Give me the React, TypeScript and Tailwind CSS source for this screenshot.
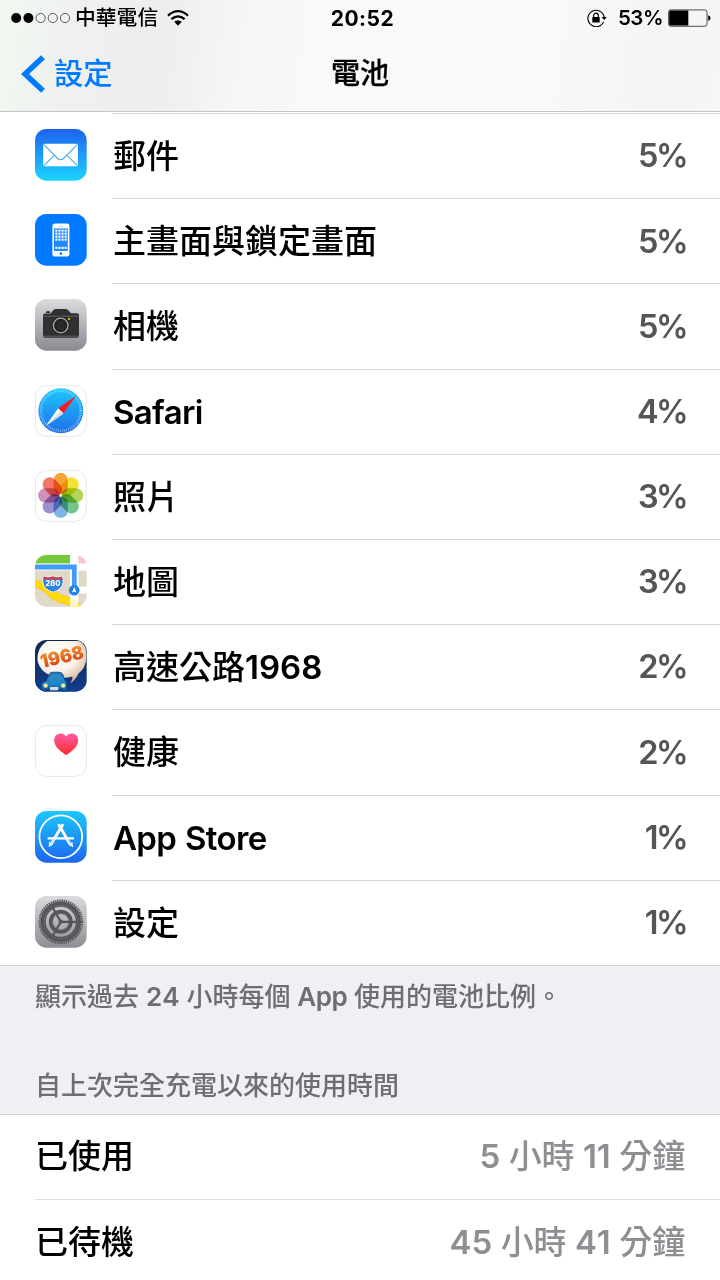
import { Fragment, type ReactNode } from 'react';
import { clsx } from 'clsx';

interface AppUsage {
  name: string;
  percent: number;
  icon: ReactNode;
}

interface IconTileProps {
  id: string;
  from: string;
  to: string;
  outlined?: boolean;
  children: ReactNode;
}

// Latin and digits need a heavier weight to sit evenly next to the CJK glyphs
function MixedText({ children }: { children: string }) {
  return (
    <>
      {children.split(/([A-Za-z]+|\d+)/).map((part, i) => {
        if (/^[A-Za-z]+$/.test(part)) {
          return <span key={i} className="font-semibold tracking-[-0.02em]">{part}</span>;
        }
        if (/^\d+$/.test(part)) {
          return <span key={i} className="font-semibold [font-kerning:none]">{part}</span>;
        }
        return <Fragment key={i}>{part}</Fragment>;
      })}
    </>
  );
}

// Rounded 52px tile shared by all the app icons
function IconTile({ id, from, to, outlined = false, children }: IconTileProps) {
  return (
    <svg viewBox="0 0 52 52" className="size-[52px] shrink-0">
      <defs>
        <linearGradient id={`${id}-bg`} x1="0" y1="0" x2="0" y2="1">
          <stop offset="0" stopColor={from} />
          <stop offset="1" stopColor={to} />
        </linearGradient>
        <clipPath id={`${id}-clip`}>
          <rect x="0" y="0" width="51.7" height="51.7" rx="11.5" />
        </clipPath>
      </defs>
      <g clipPath={`url(#${id}-clip)`}>
        <rect width="52" height="52" fill={`url(#${id}-bg)`} />
        {children}
      </g>
      {outlined && (
        <rect x="0.4" y="0.4" width="51" height="51" rx="11.5" fill="none" stroke="#e8e8e8" />
      )}
    </svg>
  );
}

function MailIcon() {
  return (
    <IconTile id="mail" from="#1f62ef" to="#1bd4fd">
      <rect x="8.2" y="14.8" width="34.8" height="22.4" rx="1.5" fill="#fff" />
      <path
        d="M8.7 15.3 L22.2 29 Q25.6 32.4 29 29 L42.5 15.3 M8.7 36.7 L19.5 26.4 M42.5 36.7 L31.8 26.4"
        fill="none"
        stroke="#48aaf6"
        strokeWidth="1.1"
      />
    </IconTile>
  );
}

function HomeLockIcon() {
  return (
    <IconTile id="home" from="#017aff" to="#017aff">
      <rect x="17.4" y="9.6" width="17" height="33" rx="2.8" fill="#fff" />
      <rect x="19" y="14.4" width="13.8" height="22.6" fill="#2389fb" />
      {[15.6, 18.6, 21.6, 24.6, 32.8].map((y) =>
        [20.3, 23.4, 26.5, 29.6].map((x) => (
          <rect key={`${x}-${y}`} x={x} y={y} width="2.1" height="2.1" fill="#fff" />
        ))
      )}
      <rect x="23.8" y="11.8" width="4.2" height="0.7" fill="#8ac0fb" />
      <circle cx="25.9" cy="39.6" r="1.3" fill="#017aff" />
    </IconTile>
  );
}

function CameraIcon() {
  return (
    <IconTile id="camera" from="#dcdddf" to="#898a90">
      <path
        d="M8 16.5 Q8 14.7 9.8 14.5 H15.5 L18.5 11 Q19.4 10 21 10 H30.6 Q32 10 33 11 L36 14.3 H42 Q44 14.3 44 16.3 V36.8 Q44 38.8 42 38.8 H10 Q8 38.8 8 36.8 Z"
        fill="#303032"
      />
      <path d="M11 14 V12.6 Q13 11.5 15 12.6 V14 Z" fill="#303032" />
      <path d="M8 17.2 H44 M8 37.2 H44" stroke="#77787a" strokeWidth="0.7" />
      <circle cx="25.7" cy="26.5" r="9.2" fill="#28282a" />
      <circle cx="25.7" cy="26.5" r="7.3" fill="#202123" stroke="#aaabad" strokeWidth="1.3" />
      <circle cx="25.7" cy="26.5" r="4.8" fill="#28292b" />
      <circle cx="34.1" cy="19.9" r="1.2" fill="#e5a81c" />
    </IconTile>
  );
}

function SafariIcon() {
  return (
    <IconTile id="safari" from="#fff" to="#fff" outlined>
      <defs>
        <linearGradient id="safari-dial" x1="0" y1="0" x2="0" y2="1">
          <stop offset="0" stopColor="#1cc7fb" />
          <stop offset="1" stopColor="#1e6fea" />
        </linearGradient>
      </defs>
      <circle cx="25.8" cy="25.8" r="22.5" fill="url(#safari-dial)" />
      <circle
        cx="25.8"
        cy="25.8"
        r="20"
        fill="none"
        stroke="#d4efff"
        strokeWidth="2.6"
        strokeDasharray="0.6 1.5"
        opacity="0.85"
      />
      <path d="M41 10.7 L23.2 23.3 L28.4 28.4 Z" fill="#fb1c22" />
      <path d="M10.7 41 L23.2 23.3 L28.4 28.4 Z" fill="#fff" />
      <path d="M10.7 41 L28.4 28.4 L25.8 25.8 Z" fill="#d8dde2" />
    </IconTile>
  );
}

const PETAL_COLORS = [
  '#f7a436',
  '#f0e334',
  '#b3d558',
  '#74c58a',
  '#7fb5e3',
  '#9c8fcb',
  '#d090bc',
  '#f47767',
];

function PhotosIcon() {
  return (
    <IconTile id="photos" from="#fff" to="#fff" outlined>
      <g className="isolate">
        {PETAL_COLORS.map((color, i) => (
          <rect
            key={color}
            x="18.6"
            y="2.8"
            width="14.2"
            height="21.6"
            rx="7.1"
            fill={color}
            transform={`rotate(${i * 45} 25.7 25.4)`}
            className="mix-blend-multiply"
          />
        ))}
      </g>
      <circle cx="25.7" cy="25.4" r="1.1" fill="#fff" />
    </IconTile>
  );
}

function MapsIcon() {
  return (
    <IconTile id="maps" from="#fff" to="#fff">
      <rect width="35" height="8.4" fill="#74c83c" />
      <rect x="43.3" width="9" height="8.4" fill="#f7c6d1" />
      <rect y="15.4" width="35" height="37" fill="#e0d9c9" />
      <rect x="43.3" y="15.8" width="9" height="15.8" fill="#e0d9c9" />
      <rect x="43.3" y="38.6" width="9" height="14" fill="#e0d9c9" />
      <path d="M-2 29 Q7 29 14 36 T30 45 Q39 47.5 46 56" fill="none" stroke="#f2c52b" strokeWidth="8.4" />
      <path d="M-2 29 Q7 29 14 36 T30 45 Q39 47.5 46 56" fill="none" stroke="#ffd90c" strokeWidth="7.4" />
      <rect x="35" y="15.4" width="8.3" height="37" fill="#fff" opacity="0.75" />
      <path d="M0 12 H39.3 V35" fill="none" stroke="#429bf8" strokeWidth="4.8" />
      <path
        d="M8.6 21.3 Q13 23 18 21 Q23 23 27.2 21.3 Q28.4 24 28.2 27 Q27.4 34.5 18 37.2 Q8.6 34.5 7.7 27 Q7.5 24 8.6 21.3 Z"
        fill="#2d82e3"
        stroke="#fff"
        strokeWidth="0.8"
      />
      <path d="M8.8 21.6 Q13 23.2 18 21.4 Q23 23.2 27 21.6 L27.7 24.5 H8.2 Z" fill="#d73d43" />
      <text x="18" y="31.4" textAnchor="middle" fill="#fff" fontSize="7.6" fontWeight="800" fontFamily="Inter, sans-serif">
        280
      </text>
      <circle cx="39.2" cy="35.2" r="5.3" fill="#1880f2" />
      <path d="M39.2 31.8 L41.6 37.8 L39.2 36.4 L36.8 37.8 Z" fill="#fff" />
    </IconTile>
  );
}

function HighwayIcon() {
  return (
    <IconTile id="highway" from="#0c2750" to="#143d8d">
      <defs>
        <radialGradient id="highway-bubble" cx="0.4" cy="0.3" r="0.75">
          <stop offset="0" stopColor="#fff" />
          <stop offset="0.55" stopColor="#faf3ea" />
          <stop offset="1" stopColor="#ceae8f" />
        </radialGradient>
        <linearGradient id="highway-number" x1="0" y1="0" x2="0" y2="1">
          <stop offset="0.2" stopColor="#f08f28" />
          <stop offset="0.8" stopColor="#dd4a1e" />
        </linearGradient>
        <linearGradient id="highway-car" x1="0" y1="0" x2="0" y2="1">
          <stop offset="0" stopColor="#176bb4" />
          <stop offset="0.55" stopColor="#2189cc" />
          <stop offset="1" stopColor="#0b4f98" />
        </linearGradient>
      </defs>
      <path
        d="M12 1 H44 Q52 4 51.5 17 Q51 28 43.5 33.5 Q40.5 40 35 43.5 Q38 39.5 37.4 36.6 Q31 39 22 37.5 Q5 34 2.4 20 Q1.6 8 12 1 Z"
        fill="url(#highway-bubble)"
      />
      <text
        transform="rotate(-13 27 17)"
        x="27"
        y="23.2"
        textAnchor="middle"
        fill="url(#highway-number)"
        fontSize="18.5"
        fontWeight="900"
        fontFamily="Inter, sans-serif"
        textLength="44"
        lengthAdjust="spacingAndGlyphs"
      >
        1968
      </text>
      <path
        d="M11 41 L14.3 34 Q15.2 32.2 18 32.2 H24 Q26.6 32.2 27.6 34 L30.5 41 Q32 42 32 45 V50 Q31.8 51.7 30 51.7 H27.5 V49.5 H11 V51.7 H8.4 Q6.5 51.7 6.4 50 V44 Q6.6 42 11 41 Z"
        fill="url(#highway-car)"
        stroke="#083a78"
        strokeWidth="0.7"
      />
      <path d="M12.7 40.2 L15.5 34.7 Q16 33.8 17.5 33.8 H24.4 Q25.7 33.8 26.3 34.8 L28.8 40.2 Z" fill="#2b86c2" />
      <circle cx="10.6" cy="45.6" r="2.2" fill="#ffe584" />
      <circle cx="28.2" cy="45.6" r="2.2" fill="#ffe584" />
      <rect x="15" y="47" width="8.4" height="3.2" rx="0.7" fill="#d5dde0" />
    </IconTile>
  );
}

function HealthIcon() {
  return (
    <IconTile id="health" from="#fff" to="#fff" outlined>
      <defs>
        <linearGradient id="health-heart" x1="0" y1="0" x2="0" y2="1">
          <stop offset="0" stopColor="#fe5ba5" />
          <stop offset="1" stopColor="#fe2b2e" />
        </linearGradient>
      </defs>
      <path
        d="M31.2 30 C27 27.2 19.2 22.5 19.2 15.2 C19.2 11.2 22.2 8.5 25.6 8.5 C28 8.5 30 9.7 31.2 11.5 C32.4 9.7 34.4 8.5 36.8 8.5 C40.2 8.5 43.2 11.2 43.2 15.2 C43.2 22.5 35.4 27.2 31.2 30 Z"
        fill="url(#health-heart)"
      />
    </IconTile>
  );
}

function AppStoreIcon() {
  return (
    <IconTile id="store" from="#1cc8fb" to="#1d65f0">
      <circle cx="25.8" cy="25.8" r="21.4" fill="none" stroke="#fff" strokeWidth="1.8" />
      <g stroke="#fff" strokeWidth="2.9" strokeLinecap="round" fill="none">
        <path d="M24 14.2 L35.2 33.2" />
        <path d="M27.4 14.2 L16 33.2" />
        <path d="M12.6 27.3 H39" strokeWidth="2.3" strokeLinecap="butt" />
      </g>
      <path d="M14.2 30.8 L17.7 33 L13.6 36.2 Z" fill="#fff" />
      <path d="M33.8 33.2 L37.4 31 L38.2 36.4 Z" fill="#fff" />
      <path d="M33 28.3 L35.6 32.7 M18.8 28.3 L16 32.7" stroke="#3e9bf7" strokeWidth="0.6" />
    </IconTile>
  );
}

function SettingsIcon() {
  return (
    <IconTile id="settings" from="#dadbdd" to="#8c8d92">
      <g fill="none" stroke="#55565a">
        <circle cx="25.8" cy="25.8" r="21.2" strokeWidth="2.4" strokeDasharray="1.4 0.82" />
        <circle cx="25.8" cy="25.8" r="18.4" strokeWidth="3.6" />
        <circle cx="25.8" cy="25.8" r="15.8" strokeWidth="1.6" />
        <circle cx="25.8" cy="25.8" r="10.2" strokeWidth="3.6" />
        <circle cx="25.8" cy="25.8" r="8" strokeWidth="1" strokeDasharray="0.9 0.7" />
        {[0, 120, 240].map((angle) => (
          <path
            key={angle}
            d="M25.8 25.8 H43"
            strokeWidth="2.2"
            transform={`rotate(${angle} 25.8 25.8)`}
          />
        ))}
      </g>
      <circle cx="25.8" cy="25.8" r="2.2" fill="#55565a" />
    </IconTile>
  );
}

const APPS: AppUsage[] = [
  { name: '郵件', percent: 5, icon: <MailIcon /> },
  { name: '主畫面與鎖定畫面', percent: 5, icon: <HomeLockIcon /> },
  { name: '相機', percent: 5, icon: <CameraIcon /> },
  { name: 'Safari', percent: 4, icon: <SafariIcon /> },
  { name: '照片', percent: 3, icon: <PhotosIcon /> },
  { name: '地圖', percent: 3, icon: <MapsIcon /> },
  { name: '高速公路1968', percent: 2, icon: <HighwayIcon /> },
  { name: '健康', percent: 2, icon: <HealthIcon /> },
  { name: 'App Store', percent: 1, icon: <AppStoreIcon /> },
  { name: '設定', percent: 1, icon: <SettingsIcon /> },
];

const USAGE_TIMES = [
  { label: '已使用', value: '5 小時 11 分鐘' },
  { label: '已待機', value: '45 小時 41 分鐘' },
];

function StatusBar() {
  return (
    <div className="grid h-9 grid-cols-[1fr_auto_1fr] items-center pr-[9px] pl-[11px]">
      <div className="flex items-center">
        <svg viewBox="0 0 60 12" className="h-3 w-[60px]">
          {[5.2, 17.4, 29.6, 41.8, 54].map((cx, i) => (
            <circle key={cx} cx={cx} cy="6" r={i < 2 ? 5 : 4.6} fill={i < 2 ? '#000' : 'none'} stroke="#222" strokeWidth={i < 2 ? 0 : 0.7} />
          ))}
        </svg>
        <span className="ml-1 pt-px text-[20.8px] leading-none">中華電信</span>
        <svg viewBox="0 0 22 16" className="ml-[9px] h-4 w-[22px]">
          <g fill="none" stroke="#000" strokeWidth="2.2">
            <path d="M1 5.6 Q11 -3.2 21 5.6" />
            <path d="M4.4 9.2 Q11 3.4 17.6 9.2" />
          </g>
          <path d="M7.2 11.8 Q11 8.8 14.8 11.8 L11 15.8 Z" />
        </svg>
      </div>
      <span className="pl-[3px] text-[21px] leading-none font-bold tracking-[0.5px]">20:52</span>
      <div className="flex items-center justify-end">
        <svg viewBox="0 0 20 18" className="h-[18px] w-5">
          <path d="M16.6 12.7 A8.2 8.2 0 1 1 17.2 8.4" fill="none" stroke="#000" strokeWidth="1.1" />
          <path d="M14.6 8 H19.8 L17.2 11 Z" />
          <rect x="5.3" y="8" width="7.4" height="5.6" rx="0.5" />
          <path d="M6.7 8.3 V6.5 A2.3 2.4 0 0 1 11.3 6.5 V8.3" fill="none" stroke="#000" strokeWidth="1.2" />
        </svg>
        <span className="ml-[11px] pt-px text-[20.5px] leading-none font-semibold tracking-[-0.5px]">53%</span>
        <svg viewBox="0 0 43 18" className="ml-[5px] h-[18px] w-[43px]">
          <rect x="0.6" y="0.9" width="38.4" height="16.4" rx="2.2" fill="none" stroke="#222" strokeWidth="0.8" />
          <path d="M1.2 3 Q1.2 1.6 2.6 1.6 H20.3 V16.6 H2.6 Q1.2 16.6 1.2 15.2 Z" />
          <path d="M40.2 6.3 Q42.6 7 42.6 9.1 Q42.6 11.3 40.2 12 Z" />
        </svg>
      </div>
    </div>
  );
}

export default function App() {
  return (
    <div
      lang="zh-Hant"
      className="flex h-[1280px] w-[720px] flex-col overflow-hidden bg-white font-['Inter','Noto_Sans_CJK_TC',sans-serif] font-medium text-black"
    >
      <header className="h-28 shrink-0 border-b border-[#c4c4c5] bg-[linear-gradient(98deg,#f2f8f2_0px,#eff2ef_60px,#eeeeee_130px,#efefef_180px,#f6f6f6_245px,#f9f9f9_330px,#f9f9f9_540px,#f4f4f4_680px,#f6f6f6_720px)]">
        <StatusBar />
        <div className="grid h-[75px] grid-cols-[1fr_auto_1fr] items-center px-[21px] text-[29px] leading-none">
          <button type="button" className="flex items-center text-[#007aff]">
            <svg viewBox="0 0 24 38" className="h-[38px] w-6">
              <path d="M22 2.2 L4 19 L22 35.8" fill="none" stroke="currentColor" strokeWidth="5.6" />
            </svg>
            <span className="ml-[9px] text-[29.3px]">設定</span>
          </button>
          <h1 className="[-webkit-text-stroke:0.3px_#000]">電池</h1>
        </div>
      </header>

      <ul className="shrink-0 pt-px">
        {APPS.map((app) => (
          <li key={app.name} className="flex h-[85.2px] items-stretch pl-[35px]">
            <div className="flex items-center pb-px">{app.icon}</div>
            <div className="ml-[25px] flex flex-1 items-center justify-between border-t border-[#d9d9db] pt-px pr-[34px] pl-px text-[33px] leading-none">
              <span>
                <MixedText>{app.name}</MixedText>
              </span>
              <span className="text-[32.5px] font-semibold tracking-[-0.08em] text-[#555]">{app.percent}%</span>
            </div>
          </li>
        ))}
      </ul>

      <section className="flex h-[150px] shrink-0 flex-col justify-between border-y border-[#d0d0d5] bg-[#efeff4] px-[35px] pt-[17px] pb-[14px] text-[26px] leading-[28px] text-[#6d6d72]">
        <p>
          <MixedText>顯示過去 24 小時每個 App 使用的電池比例。</MixedText>
        </p>
        <h2>自上次完全充電以來的使用時間</h2>
      </section>

      <dl className="pl-[35px] text-[33px] leading-none">
        {USAGE_TIMES.map((row, i) => (
          <div
            key={row.label}
            className={clsx(
              'flex items-center justify-between pr-[35px]',
              i === 0 ? 'h-[84px]' : 'h-[85px] border-t border-[#e0e0e2] pt-px'
            )}
          >
            <dt>{row.label}</dt>
            <dd className="tracking-[-0.15px] text-[#8e8e93]">
              <MixedText>{row.value}</MixedText>
            </dd>
          </div>
        ))}
      </dl>
    </div>
  );
}
